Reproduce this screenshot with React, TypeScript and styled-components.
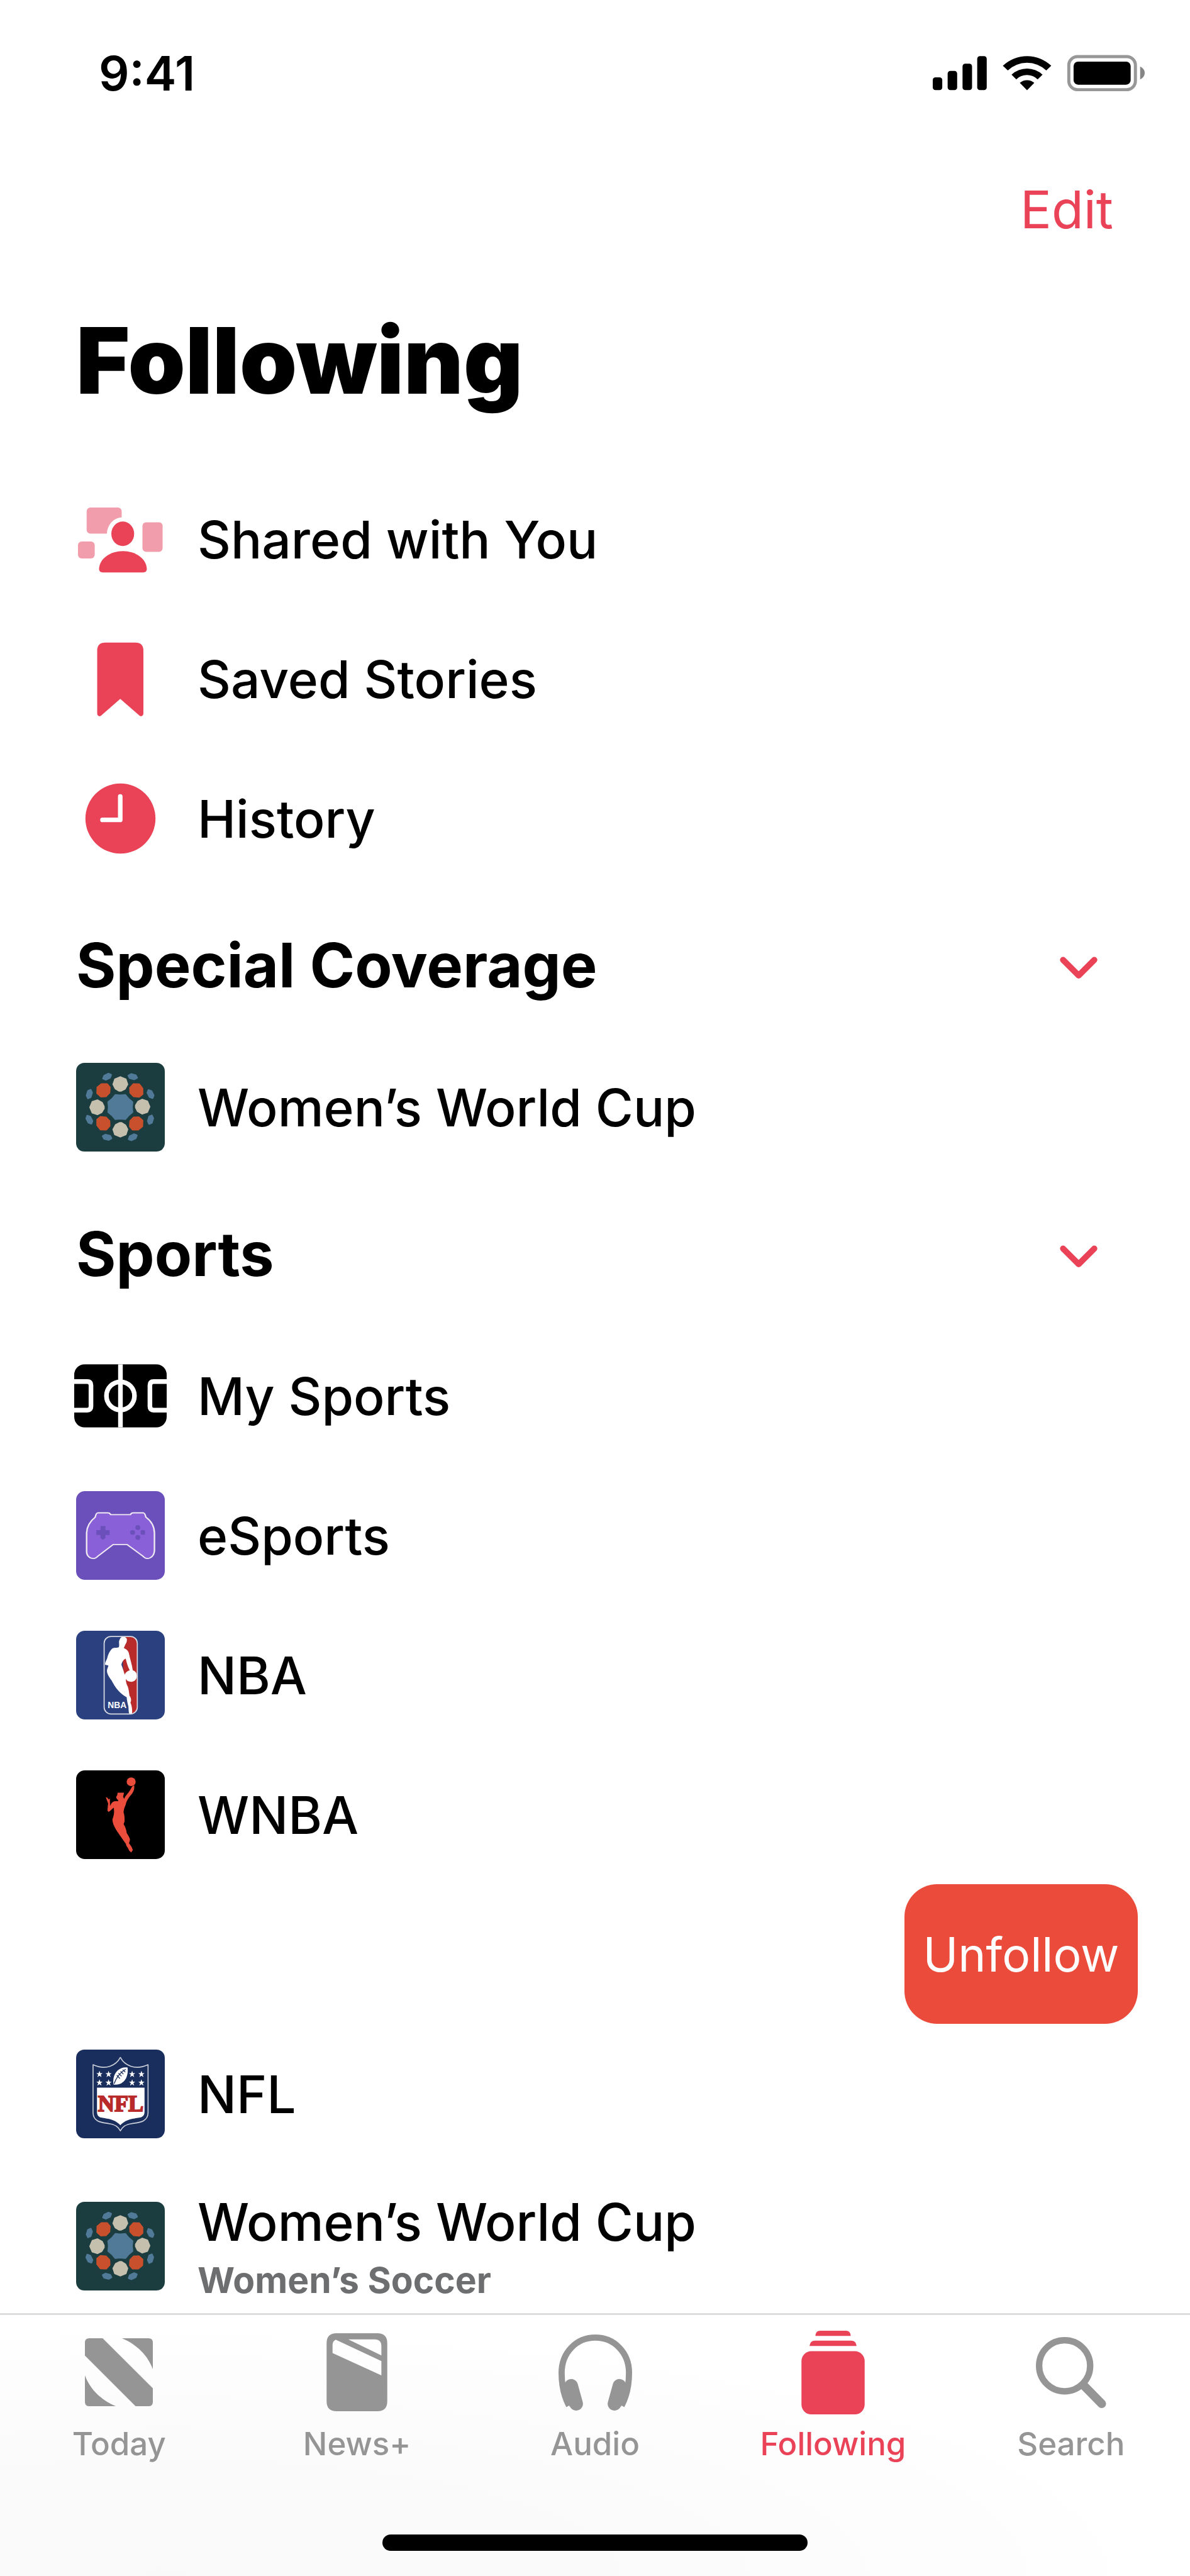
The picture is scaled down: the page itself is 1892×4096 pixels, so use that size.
import React from "react";
import styled, { createGlobalStyle } from "styled-components";

const accent = "#ea4358";
const muted = "#959595";

const GlobalStyle = createGlobalStyle`
  *, *::before, *::after { box-sizing: border-box; }
  body {
    margin: 0;
    background: #fff;
    color: #000;
    font-family: Inter, "Liberation Sans", sans-serif;
  }
  svg { display: block; flex: none; }
`;

const Screen = styled.div`
  display: flex;
  flex-direction: column;
  height: 100vh;
  background: #fff;
`;

const StatusBar = styled.header`
  display: flex;
  flex: none;
  align-items: center;
  justify-content: space-between;
  height: 232px;
  padding: 0 72px 0 157px;
`;

const Time = styled.time`
  font-size: 76px;
  font-weight: 600;
`;

const NavBar = styled.div`
  display: flex;
  flex: none;
  align-items: center;
  justify-content: flex-end;
  height: 202px;
  padding: 0 122px;
`;

const PlainButton = styled.button`
  margin: 0;
  padding: 0;
  border: 0;
  background: none;
  color: ${accent};
  font: inherit;
  cursor: pointer;
`;

const EditButton = styled(PlainButton)`
  font-size: 83px;
`;

const CollapseButton = styled(PlainButton)`
  padding-top: 8px;
`;

const Content = styled.main`
  flex: 1 1 0;
  min-height: 0;
  overflow: hidden;
`;

const Title = styled.h1`
  margin: 0 0 33px;
  padding-left: 121px;
  font-size: 146px;
  font-weight: 900;
  line-height: 279px;
`;

const SectionHeader = styled.div`
  display: flex;
  align-items: center;
  justify-content: space-between;
  height: 237px;
  padding: 8px 147px 0 121px;
`;

const SectionTitle = styled.h2`
  margin: 0;
  font-size: 97px;
  font-weight: 700;
`;

const List = styled.ul`
  margin: 0;
  padding: 0;
  list-style: none;
`;

const Row = styled.li<{ $tall?: boolean }>`
  display: flex;
  height: ${(p) => (p.$tall ? 263 : 222)}px;
`;

const RowLink = styled.a`
  display: flex;
  flex: 1;
  align-items: center;
  gap: 52px;
  padding-left: 121px;
  color: inherit;
  text-decoration: none;
`;

const IconSlot = styled.span`
  display: flex;
  flex: none;
  justify-content: center;
  width: 141px;
`;

const RowText = styled.span`
  display: flex;
  flex-direction: column;
  padding-top: 4px;
`;

const RowTitle = styled.span`
  font-size: 82px;
  font-weight: 500;
  line-height: 104px;
`;

const RowSubtitle = styled.span`
  color: #6d6e70;
  font-size: 57px;
  font-weight: 700;
  line-height: 80px;
`;

const SwipeRow = styled(Row)`
  justify-content: flex-end;
  padding-right: 83px;
`;

const UnfollowButton = styled.button`
  width: 371px;
  padding: 0;
  border: 0;
  border-radius: 52px;
  background: #ea4b3b;
  color: #fff;
  font: inherit;
  font-size: 75px;
  cursor: pointer;
`;

const TabBar = styled.nav`
  display: flex;
  flex: none;
  flex-direction: column;
  align-items: center;
  height: 418px;
  padding-bottom: 40px;
  border-top: 3px solid #dcdcdc;
  background: radial-gradient(ellipse at 14% 100%, #f9f9f9 0%, #fafafa 25%, #fcfcfc 48%, #fff 70%);
`;

const Tabs = styled.div`
  display: flex;
  flex: 1;
  width: 100%;
`;

const Tab = styled.a<{ $active?: boolean }>`
  display: flex;
  flex: 1 1 0;
  flex-direction: column;
  align-items: center;
  gap: 17px;
  padding-top: 24px;
  color: ${(p) => (p.$active ? accent : muted)};
  font-size: 51px;
  font-weight: 500;
  line-height: 60px;
  text-decoration: none;
`;

const TabIcon = styled.span`
  display: flex;
  align-items: center;
  height: 134px;
`;

const HomeIndicator = styled.div`
  width: 676px;
  height: 26px;
  border-radius: 13px;
  background: #000;
`;

const StatusIcons = () => (
  <svg width="337" height="58" viewBox="76 84 1025 176" role="img" aria-label="Signal, Wi-Fi and battery">
    <rect x="76" y="193" width="46" height="62" rx="13" />
    <rect x="148" y="162" width="46" height="93" rx="13" />
    <rect x="220" y="127" width="46" height="128" rx="13" />
    <rect x="291" y="91" width="46" height="164" rx="13" />
    <path d="M415 137A170 170 0 0 1 649 137L625 160A134 134 0 0 0 439 160Z" />
    <path d="M457 180A110 110 0 0 1 607 180L583 203A74 74 0 0 0 480 203Z" />
    <path d="M497 220A54 54 0 0 1 567 220L532 256Z" />
    <rect x="734" y="93" width="322" height="160" rx="42" fill="none" stroke="#979797" strokeWidth="15" />
    <rect x="757" y="117" width="276" height="112" rx="22" />
    <path d="M1079 141Q1101 152 1101 172T1079 204Z" fill="#858585" />
  </svg>
);

const SharedIcon = () => (
  <svg width="141" height="141" viewBox="0 0 143 143" fill={accent}>
    <defs>
      <mask id="head-gap">
        <rect width="143" height="143" fill="#fff" />
        <ellipse cx="75.2" cy="62.6" rx="25.5" ry="26.5" fill="#000" />
      </mask>
    </defs>
    <g fill="#f19dab">
      <rect x="17" y="20.4" width="56.5" height="42" rx="6" mask="url(#head-gap)" />
      <rect x="107" y="44" width="32.5" height="47.8" rx="6" />
      <rect x="3" y="75" width="27" height="27.4" rx="6" />
    </g>
    <ellipse cx="75.2" cy="62.6" rx="18.4" ry="19.8" />
    <path d="M43 125C39 125 37 123 37 119C38 102 56 90.6 75.5 90.6S113 102 114 119C114 123 112 125 108 125Z" />
  </svg>
);

const BookmarkIcon = () => (
  <svg width="141" height="141" viewBox="0 0 143 143" fill={accent}>
    <path d="M34 26Q34 13 47 13H95.500Q108.500 13 108.500 26V127C108.500 131.500 104.500 133 101.500 130L71.200 103.700L41 130C38 133 34 131.500 34 127Z" />
  </svg>
);

const ClockIcon = () => (
  <svg width="141" height="141" viewBox="0 0 143 143">
    <circle cx="71.5" cy="71.5" r="56.5" fill={accent} />
    <path d="M71.2 36V73.7H42.500" fill="none" stroke="#fff" strokeWidth="7.4" strokeLinecap="round" strokeLinejoin="round" />
  </svg>
);

const starPoints = Array.from({ length: 16 }, (_, i) => {
  const angle = (i * Math.PI) / 8;
  const radius = i % 2 ? 62 : 55;
  return `${(214 + radius * Math.sin(angle)).toFixed(1)},${(214 - radius * Math.cos(angle)).toFixed(1)}`;
}).join(" ");

const ringBlues = [
  [150, 67, -20], [274, 67, 20], [360, 151, 68], [360, 275, -68],
  [274, 360, -20], [150, 360, 20], [64, 275, 68], [64, 151, -68],
];
const ringOranges = [[132, 133, 0], [291, 133, 90], [291, 293, 180], [132, 293, 270]];
const ringBeiges = [[214, 102, 0], [322, 212, 90], [214, 324, 180], [101, 215, 270]];

const WorldCupIcon = () => (
  <svg width="141" height="141" viewBox="0 0 429 429">
    <rect width="429" height="429" rx="40" fill="#1b3d40" />
    <g fill="#507a98" stroke="#507a98" strokeLinejoin="round">
      <polygon points={starPoints} strokeWidth="10" />
      {ringBlues.map(([x, y, r]) => (
        <path key={`${x}-${y}`} d="M-21 2L-11 -9L11 -11L21 -2L11 9L-11 11Z" strokeWidth="9" transform={`translate(${x} ${y}) rotate(${r})`} />
      ))}
    </g>
    <g fill="#c9502c" stroke="#c9502c" strokeWidth="8" strokeLinejoin="round">
      {ringOranges.map(([x, y, r]) => (
        <path key={`${x}-${y}`} d="M-9 -30L18 -30L31 -14L29 12L12 29L-12 30L-30 14L-29 -14Z" transform={`translate(${x} ${y}) rotate(${r})`} />
      ))}
    </g>
    <g fill="#c5bfae" stroke="#c5bfae" strokeWidth="8" strokeLinejoin="round">
      {ringBeiges.map(([x, y, r]) => (
        <path key={`${x}-${y}`} d="M0 -33L26 -22L34 2L22 24L4 33L-6 33L-24 22L-34 2L-26 -22Z" transform={`translate(${x} ${y}) rotate(${r})`} />
      ))}
    </g>
  </svg>
);

const MySportsIcon = () => (
  <svg width="147" height="101" viewBox="0 0 149 102">
    <defs>
      <clipPath id="pitch"><rect width="149" height="102" rx="17" /></clipPath>
    </defs>
    <g clipPath="url(#pitch)">
      <rect width="149" height="102" />
      <g fill="none" stroke="#fff" strokeWidth="7.500">
        <path d="M74.500 0V102" />
        <circle cx="74.5" cy="51" r="22.6" />
        <path d="M-6 28H21Q27 28 27 34V68Q27 74 21 74H-6" />
        <path d="M155 28H128Q122 28 122 34V68Q122 74 128 74H155" />
      </g>
    </g>
  </svg>
);

const ESportsIcon = () => (
  <svg width="141" height="141" viewBox="0 0 143 143">
    <rect width="143" height="143" rx="14" fill="#6b50bc" />
    <g transform="scale(.4464 .3333) translate(-74 -738)">
      <path
        d="M152 843H189Q195 843 199 852H270Q274 843 280 843H317Q323 845 326 864C343 880 356 905 357 940V1025C356 1052 343 1064 331 1064C323 1064 318 1057 313 1050L258 996H208L155 1050C150 1057 145 1064 137 1064C124 1064 112 1052 112 1030V940C113 905 126 882 143 864Q146 845 152 843Z"
        fill="#8960d8"
        stroke="#efe9f2"
        strokeWidth="5.500"
        strokeLinejoin="round"
      />
      <path d="M162 907H180V927H195V950H180V965L171 974L162 965V950H147V927H162Z" fill="#6b50bc" />
      <g fill="#6b50bc">
        <ellipse cx="297" cy="914" rx="9" ry="12" />
        <ellipse cx="278" cy="938" rx="9" ry="11" />
        <rect x="307" y="927" width="16" height="22" rx="4" />
        <ellipse cx="297" cy="962" rx="9" ry="12" />
      </g>
    </g>
  </svg>
);

const LogoText = styled.text<{ $serif?: boolean }>`
  font-family: ${(p) => (p.$serif ? '"Liberation Serif", serif' : '"Liberation Sans", sans-serif')};
  font-weight: 700;
`;

const NbaIcon = () => (
  <svg width="141" height="141" viewBox="0 0 143 143">
    <defs>
      <clipPath id="nba-panel"><rect x="45.5" y="9.500" width="53" height="124.500" rx="10" /></clipPath>
    </defs>
    <rect width="143" height="143" rx="14" fill="#2a407f" />
    <g clipPath="url(#nba-panel)">
      <g transform="scale(.3827 .3333) translate(-86 -154)">
        <path d="M286 170H350V570H315L306 460L285 350L280 240Z" fill="#b82b2a" />
        <path
          d="M276 186C282 180 297 182 300 194C301 208 296 216 293 222L287 238C298 244 307 252 309 266C313 290 321 315 325 346C337 350 342 360 342 374C342 390 331 401 318 401C308 401 299 396 295 386C296 400 298 413 304 425C308 440 309 453 311 468C319 480 319 492 315 502C321 518 323 535 322 556H310C306 545 308 530 306 520C303 505 300 492 299 476C285 468 274 456 264 444C252 430 244 412 235 394C225 378 215 362 216 345C217 337 221 330 222 322L208 318C207 305 214 298 217 287C221 265 230 248 239 239C249 234 260 238 266 233C269 224 266 214 267 204C270 196 271 190 276 186ZM295 289C286 293 278 308 277 319C283 335 286 350 291 366C295 355 303 348 312 346C303 326 299 309 295 289Z"
          fill="#fff"
          fillRule="evenodd"
        />
      </g>
    </g>
    <rect x="45.2" y="9.200" width="53.5" height="125" rx="11" fill="none" stroke="#d5d8e2" strokeWidth="1.800" />
    <LogoText x="51" y="125" fontSize="14" fill="#fff">NBA</LogoText>
  </svg>
);

const WnbaIcon = () => (
  <svg width="141" height="141" viewBox="0 0 143 143">
    <rect width="143" height="143" rx="14" />
    <g transform="scale(.3827 .3333) translate(-86 -830)" fill="#eb4d3c">
      <ellipse cx="318" cy="885" rx="19" ry="21" />
      <path d="M331 902C333 925 325 940 314 953C304 968 297 980 295 996C290 1010 286 1021 286 1034C290 1046 291 1064 290 1078L286 1090C295 1106 298 1120 299 1133C306 1146 312 1155 313 1166L309 1183C315 1192 322 1202 325 1216L318 1227L309 1217C306 1204 296 1197 296 1186C284 1166 272 1147 259 1125C250 1108 240 1090 239 1067C243 1054 246 1043 246 1030L245 1010C238 1014 231 1027 222 1031L218 1024L221 990L211 960L218 962L223 971L228 966L229 1003C233 991 240 979 250 979H264L262 972C253 966 254 955 259 952L261 938H288L284 957L288 968C295 950 306 940 314 925L322 908Z" />
    </g>
  </svg>
);

const nflStars = [
  [113, 118], [157, 118], [271, 118], [316, 118],
  [113, 159], [157, 159], [271, 159], [316, 159],
];

const NflIcon = () => (
  <svg width="141" height="141" viewBox="0 0 429 429">
    <rect width="429" height="429" rx="40" fill="#1a2e5e" />
    <path
      d="M214 38C194 76 145 102 82 73V306C83 350 122 352 158 358C188 362 203 372 214 393C225 372 240 362 270 358C306 352 347 350 348 306V73C284 102 234 76 214 38Z"
      fill="none"
      stroke="#c9ced8"
      strokeWidth="5"
      strokeLinejoin="round"
    />
    <path d="M101 184H331V302C330 333 303 328 272 335C246 341 229 350 214 366C199 350 182 341 156 335C125 328 102 333 101 302Z" fill="#fff" />
    {nflStars.map(([x, y]) => (
      <path key={`${x}-${y}`} d="M0 -15L4 -4H15L6 3L10 15L0 8L-10 15L-6 3L-15 -4H-4Z" fill="#fff" transform={`translate(${x} ${y})`} />
    ))}
    <path d="M249 87C252 115 246 139 229 155C214 168 199 171 181 169C177 143 183 118 200 102C215 89 232 84 249 87Z" fill="#fff" />
    <path d="M184 165C193 137 212 113 240 95M197 124L212 140M205 114L220 129M215 105L229 119M225 97L238 109" fill="none" stroke="#1a2e5e" strokeWidth="4" />
    <LogoText $serif x="216" y="299" textAnchor="middle" fontSize="110" fill="#b92b2b" stroke="#b92b2b" strokeWidth="6">NFL</LogoText>
  </svg>
);

const Chevron = () => (
  <svg width="60" height="36" viewBox="0 0 61 37" fill="none" stroke={accent} strokeWidth="10" strokeLinecap="round" strokeLinejoin="round">
    <path d="M5 5.500L30.500 31L56 5.500" />
  </svg>
);

const TodayIcon = () => (
  <svg width="108" height="108" viewBox="0 0 110 110" fill="currentColor">
    <path d="M7 0H28.700L110 81V103Q110 110 103 110H82L0 28V7Q0 0 7 0Z" />
    <path d="M60 0H103Q110 0 110 7V50C102 28 84 10 60 0Z" />
    <path d="M0 60C8 82 26 100 50 110H7Q0 110 0 103Z" />
  </svg>
);

const NewsPlusIcon = () => (
  <svg width="97" height="124" viewBox="0 0 98 126" fill="currentColor">
    <path
      fillRule="evenodd"
      d="M16 0H82Q98 0 98 16V110Q98 126 82 126H16Q0 126 0 110V16Q0 0 16 0ZM14.700 10.500Q9.600 13 9.600 19V32L88.500 68V45ZM35 10L88.500 35.700V21Q88.500 10 77.500 10Z"
    />
  </svg>
);

const HeadphonesIcon = () => (
  <svg width="117" height="121" viewBox="0 0 119 123" fill="currentColor" stroke="currentColor">
    <path d="M17 115C9 100 5 80 5 62C5 29 29 5 59.500 5S114 29 114 62C114 80 110 100 102 115" fill="none" strokeWidth="10" />
    <path d="M20.500 83L28.500 112M98.500 83L90.500 112" strokeWidth="22" strokeLinecap="round" />
    <path d="M7 78L18 117L24 110L18 80ZM112 78L101 117L95 110L101 80Z" stroke="none" />
  </svg>
);

const FollowingIcon = () => (
  <svg width="101" height="133" viewBox="0 0 102 135" fill="currentColor">
    <path d="M22.500 8.500Q23 0 30 0H72Q79 0 79.500 8.500Z" />
    <path d="M13 24.500Q14 16 22 16H80Q88 16 89 24.500Z" />
    <rect y="33" width="102" height="102" rx="16" />
  </svg>
);

const SearchIcon = () => (
  <svg width="112" height="113" viewBox="0 0 114 115" fill="none" stroke="currentColor">
    <circle cx="46.5" cy="46.5" r="41.3" strokeWidth="10.400" />
    <path d="M78 79L106.500 108" strokeWidth="14" strokeLinecap="round" />
  </svg>
);

type Item = { title: string; subtitle?: string; icon: React.ReactNode };

const shortcuts: Item[] = [
  { title: "Shared with You", icon: <SharedIcon /> },
  { title: "Saved Stories", icon: <BookmarkIcon /> },
  { title: "History", icon: <ClockIcon /> },
];

const leagues: Item[] = [
  { title: "My Sports", icon: <MySportsIcon /> },
  { title: "eSports", icon: <ESportsIcon /> },
  { title: "NBA", icon: <NbaIcon /> },
  { title: "WNBA", icon: <WnbaIcon /> },
];

const tabs = [
  { label: "Today", icon: <TodayIcon /> },
  { label: "News+", icon: <NewsPlusIcon /> },
  { label: "Audio", icon: <HeadphonesIcon /> },
  { label: "Following", icon: <FollowingIcon />, active: true },
  { label: "Search", icon: <SearchIcon /> },
];

const TopicRow = ({ title, subtitle, icon }: Item) => (
  <Row $tall={Boolean(subtitle)}>
    <RowLink href="#">
      <IconSlot>{icon}</IconSlot>
      <RowText>
        <RowTitle>{title}</RowTitle>
        {subtitle && <RowSubtitle>{subtitle}</RowSubtitle>}
      </RowText>
    </RowLink>
  </Row>
);

const Section = ({ title, children }: { title: string; children: React.ReactNode }) => (
  <section>
    <SectionHeader>
      <SectionTitle>{title}</SectionTitle>
      <CollapseButton aria-label={`Collapse ${title}`} aria-expanded="true">
        <Chevron />
      </CollapseButton>
    </SectionHeader>
    <List>{children}</List>
  </section>
);

export default function App() {
  return (
    <>
      <GlobalStyle />
      <Screen>
        <StatusBar>
          <Time>9:41</Time>
          <StatusIcons />
        </StatusBar>
        <NavBar>
          <EditButton>Edit</EditButton>
        </NavBar>
        <Content>
          <Title>Following</Title>
          <List>
            {shortcuts.map((item) => (
              <TopicRow key={item.title} {...item} />
            ))}
          </List>
          <Section title="Special Coverage">
            <TopicRow title="Women’s World Cup" icon={<WorldCupIcon />} />
          </Section>
          <Section title="Sports">
            {leagues.map((item) => (
              <TopicRow key={item.title} {...item} />
            ))}
            <SwipeRow>
              <UnfollowButton>Unfollow</UnfollowButton>
            </SwipeRow>
            <TopicRow title="NFL" icon={<NflIcon />} />
            <TopicRow title="Women’s World Cup" subtitle="Women’s Soccer" icon={<WorldCupIcon />} />
          </Section>
        </Content>
        <TabBar>
          <Tabs>
            {tabs.map((tab) => (
              <Tab key={tab.label} href="#" $active={tab.active} aria-current={tab.active ? "page" : undefined}>
                <TabIcon>{tab.icon}</TabIcon>
                {tab.label}
              </Tab>
            ))}
          </Tabs>
          <HomeIndicator />
        </TabBar>
      </Screen>
    </>
  );
}
